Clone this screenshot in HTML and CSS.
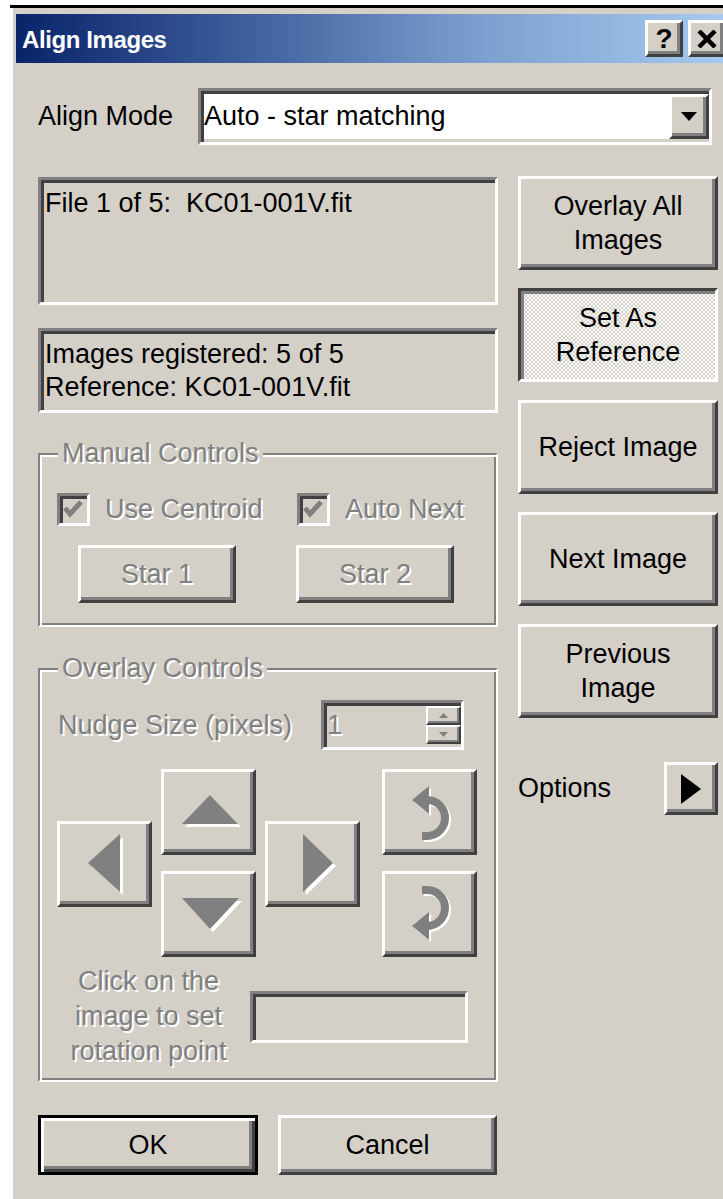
FILE: index.html
```html
<!DOCTYPE html>
<html lang="en">
<head>
<meta charset="utf-8">
<title>Align Images</title>
<link rel="stylesheet" href="styles.css">
</head>
<body>
<div class="topline"></div>
<div class="window">
  <div class="titlebar">
    <span class="title">Align Images</span>
    <div class="cap-btns">
      <span class="cap-btn raised">?</span>
      <span class="cap-btn raised">
        <svg width="20" height="18" viewBox="0 0 20 18"><path d="M2 1 L18 17 M18 1 L2 17" stroke="#000" stroke-width="4.5" fill="none"/></svg>
      </span>
    </div>
  </div>

  <div class="client">
    <div class="mode-row">
      <span class="mode-label">Align Mode</span>
      <div class="combo sunken">
        <span class="combo-text">Auto - star matching</span>
        <span class="combo-btn raised">
          <svg width="16" height="10" viewBox="0 0 16 10"><polygon points="0,0 16,0 8,9" fill="#000"/></svg>
        </span>
      </div>
    </div>

    <div class="main">
      <div class="left">
        <div class="well sunken well-file">File 1 of 5:&nbsp; KC01-001V.fit</div>
        <div class="well sunken well-status">Images registered: 5 of 5<br>Reference: KC01-001V.fit</div>

        <div class="group group-manual">
          <span class="group-label disabled">Manual Controls</span>
          <div class="checks">
            <div class="check check-first">
              <span class="cbox sunken">
                <svg width="27" height="27" viewBox="0 0 27 27"><polyline points="5,12 10,18 21,6" stroke="#808080" stroke-width="5" fill="none"/></svg>
              </span>
              <span class="disabled">Use Centroid</span>
            </div>
            <div class="check">
              <span class="cbox sunken">
                <svg width="27" height="27" viewBox="0 0 27 27"><polyline points="5,12 10,18 21,6" stroke="#808080" stroke-width="5" fill="none"/></svg>
              </span>
              <span class="disabled">Auto Next</span>
            </div>
          </div>
          <div class="star-row">
            <span class="btn raised star-btn disabled">Star 1</span>
            <span class="btn raised star-btn disabled">Star 2</span>
          </div>
        </div>

        <div class="group group-overlay">
          <span class="group-label disabled">Overlay Controls</span>
          <div class="nudge-row">
            <span class="nudge-label disabled">Nudge Size (pixels)</span>
            <div class="spin sunken">
              <span class="spin-val disabled">1</span>
              <div class="spin-btns">
                <span class="spin-half raised">
                  <svg width="9" height="5" viewBox="0 0 9 5"><polygon points="4.5,0 9,5 0,5" fill="#808080"/></svg>
                </span>
                <span class="spin-half raised">
                  <svg width="9" height="5" viewBox="0 0 9 5"><polygon points="0,0 9,0 4.5,5" fill="#808080"/></svg>
                </span>
              </div>
            </div>
          </div>

          <div class="pad">
            <span class="btn raised pad-btn pad-left">
              <svg width="95" height="86" viewBox="0 0 95 86">
                <polygon points="34,45 66,16 66,74" fill="#fff"/>
                <polygon points="31,42 63,13 63,71" fill="#808080"/>
              </svg>
            </span>
            <span class="btn raised pad-btn pad-up">
              <svg width="95" height="86" viewBox="0 0 95 86">
                <polygon points="52,29 24,58 80,58" fill="#fff"/>
                <polygon points="49,26 21,55 77,55" fill="#808080"/>
              </svg>
            </span>
            <span class="btn raised pad-btn pad-down">
              <svg width="95" height="86" viewBox="0 0 95 86">
                <polygon points="24,30 81,30 52,61" fill="#fff"/>
                <polygon points="21,27 78,27 49,58" fill="#808080"/>
              </svg>
            </span>
            <span class="btn raised pad-btn pad-right">
              <svg width="95" height="86" viewBox="0 0 95 86">
                <polygon points="41,16 71,45 41,74" fill="#fff"/>
                <polygon points="38,13 68,42 38,71" fill="#808080"/>
              </svg>
            </span>
            <span class="btn raised pad-btn pad-ccw">
              <svg width="95" height="86" viewBox="0 0 95 86">
                <g transform="translate(2,2)" fill="#fff" stroke="#fff">
                  <path d="M45 31 A18 18 0 1 1 45 67 L40 67" stroke-width="8" fill="none"/>
                  <polygon points="30,31 47,17 47,45" stroke="none"/>
                </g>
                <g fill="#808080" stroke="#808080">
                  <path d="M45 31 A18 18 0 1 1 45 67 L40 67" stroke-width="8" fill="none"/>
                  <polygon points="30,31 47,17 47,45" stroke="none"/>
                </g>
              </svg>
            </span>
            <span class="btn raised pad-btn pad-cw">
              <svg width="95" height="86" viewBox="0 0 95 86">
                <g transform="translate(2,88) scale(1,-1)" fill="#fff" stroke="#fff">
                  <path d="M45 31 A18 18 0 1 1 45 67 L40 67" stroke-width="8" fill="none"/>
                  <polygon points="30,31 47,17 47,45" stroke="none"/>
                </g>
                <g transform="translate(0,86) scale(1,-1)" fill="#808080" stroke="#808080">
                  <path d="M45 31 A18 18 0 1 1 45 67 L40 67" stroke-width="8" fill="none"/>
                  <polygon points="30,31 47,17 47,45" stroke="none"/>
                </g>
              </svg>
            </span>
          </div>

          <div class="rot-row">
            <span class="rot-text disabled">Click on the<br>image to set<br>rotation point</span>
            <span class="rot-box sunken"></span>
          </div>
        </div>

        <div class="dlg-btns">
          <span class="btn default-btn dlg-btn">OK</span>
          <span class="btn raised dlg-btn">Cancel</span>
        </div>
      </div>

      <div class="right">
        <span class="btn raised side-btn">Overlay All<br>Images</span>
        <span class="btn pressed side-btn">Set As<br>Reference</span>
        <span class="btn raised side-btn">Reject Image</span>
        <span class="btn raised side-btn">Next Image</span>
        <span class="btn raised side-btn">Previous<br>Image</span>
        <div class="options-row">
          <span>Options</span>
          <span class="btn raised opt-btn">
            <svg width="20" height="30" viewBox="0 0 20 30"><polygon points="0,0 20,15 0,30" fill="#000"/></svg>
          </span>
        </div>
      </div>
    </div>
  </div>
</div>
</body>
</html>
```

FILE: styles.css
```css
html, body {
  margin: 0;
  height: 100%;
  overflow: hidden;
  background: #fff;
}

body {
  font-family: "Liberation Sans", Arial, sans-serif;
  font-size: 27px;
  color: #000;
}

.topline {
  height: 3px;
  margin: 5px 0 0 10px;
  background: #000;
}

.window {
  box-sizing: border-box;
  width: 716px;
  height: 1191px;
  margin-left: 13px;
  padding: 6px 0 0 3px;
  background: #d4d0c8;
}

/* ---- classic 3D edges ---- */
.raised {
  box-sizing: border-box;
  border: 3px solid;
  border-color: #fff #404040 #404040 #fff;
  box-shadow: inset -3px -3px 0 #808080;
  background: #d4d0c8;
}

.sunken {
  box-sizing: border-box;
  border: 3px solid;
  border-color: #808080 #fff #fff #808080;
  box-shadow: inset 3px 3px 0 #404040, inset -3px -3px 0 #d4d0c8;
}

.pressed {
  box-sizing: border-box;
  border: 3px solid;
  border-color: #404040 #fff #fff #404040;
  box-shadow: inset 3px 3px 0 #808080;
  background-color: #e6e4df;
  background-image: repeating-conic-gradient(#fff 0 25%, #d4d0c8 0 50%);
  background-size: 4px 4px;
}

.disabled {
  color: #808080;
  text-shadow: 2px 2px 0 #fff;
}

/* ---- title bar ---- */
.titlebar {
  height: 49px;
  display: flex;
  align-items: center;
  justify-content: space-between;
  padding: 0 3px 0 6px;
  background: linear-gradient(90deg, #0a246a 0%, #3a5a98 30%, #7d9fcf 65%, #a6caf0 100%);
}

.title {
  color: #fff;
  font-weight: bold;
  font-size: 24px;
  letter-spacing: -0.4px;
  padding-top: 2px;
}

.cap-btns {
  display: flex;
  gap: 5px;
}

.cap-btn {
  width: 38px;
  height: 37px;
  display: flex;
  align-items: center;
  justify-content: center;
  font-weight: bold;
  font-size: 28px;
}

/* ---- client area ---- */
.client {
  padding: 25px 0 0 22px;
}

.mode-row {
  display: flex;
  align-items: center;
  height: 57px;
}

.mode-label {
  width: 160px;
}

.combo {
  width: 514px;
  height: 57px;
  display: flex;
  align-items: center;
  background: #fff;
}

.combo-text {
  padding-left: 3px;
}

.combo-btn {
  width: 40px;
  height: 45px;
  margin-left: auto;
  display: flex;
  align-items: center;
  justify-content: center;
}

.main {
  display: flex;
  gap: 20px;
  margin-top: 31px;
}

.left {
  width: 460px;
}

.right {
  width: 200px;
  display: flex;
  flex-direction: column;
  gap: 18px;
}

/* ---- read-only text wells ---- */
.well {
  line-height: 34px;
  padding: 6px 4px 3px;
}

.well-file {
  height: 128px;
  margin-top: 1px;
}

.well-status {
  height: 85px;
  margin-top: 23px;
  line-height: 33px;
  padding-top: 7px;
}

/* ---- etched group boxes ---- */
.group {
  box-sizing: border-box;
  width: 460px;
  border-style: solid;
  border-width: 2px;
  border-color: #808080 #fff #fff #808080;
  box-shadow: inset 2px 2px 0 #fff, inset -2px -2px 0 #808080;
  padding: 0 15px 22px 17px;
}

.group-label {
  display: table;
  margin: -19px 0 0 1px;
  padding: 0 4px;
  line-height: 34px;
  background: #d4d0c8;
}

.group-manual {
  margin-top: 40px;
}

.group-overlay {
  margin-top: 41px;
  padding-bottom: 11px;
}

.checks {
  display: flex;
  align-items: center;
  height: 34px;
  margin-top: 22px;
}

.check {
  display: flex;
  align-items: center;
  gap: 15px;
}

.check-first {
  width: 240px;
}

.cbox {
  width: 33px;
  height: 33px;
  display: flex;
  align-items: center;
  justify-content: center;
  background: #d4d0c8;
}

.btn {
  display: flex;
  align-items: center;
  justify-content: center;
  text-align: center;
  line-height: 34px;
}

.star-row {
  display: flex;
  gap: 60px;
  margin-top: 19px;
  padding-left: 21px;
}

.star-btn {
  width: 158px;
  height: 58px;
}

.nudge-row {
  display: flex;
  align-items: center;
  height: 50px;
  margin-top: 15px;
}

.nudge-label {
  width: 263px;
  margin-left: 1px;
}

.spin {
  width: 143px;
  height: 50px;
  display: flex;
  align-items: center;
}

.spin-val {
  padding-left: 3px;
}

.spin-btns {
  margin-left: auto;
  width: 35px;
  height: 38px;
  display: flex;
  flex-direction: column;
}

.spin-half {
  flex: 1;
  display: flex;
  align-items: center;
  justify-content: center;
  border-width: 2px;
  box-shadow: inset -2px -2px 0 #808080;
}

.pad {
  display: grid;
  grid-template-columns: 95px 95px 95px 108px;
  grid-template-rows: 86px 86px;
  column-gap: 9px;
  row-gap: 16px;
  margin-top: 19px;
}

.pad-btn {
  width: 95px;
  height: 86px;
}

.pad-btn svg {
  margin: -3px;
  flex: none;
}

.pad-left  { grid-column: 1; grid-row: 1 / 3; align-self: center; margin-top: 2px; }
.pad-up    { grid-column: 2; grid-row: 1; }
.pad-down  { grid-column: 2; grid-row: 2; }
.pad-right { grid-column: 3; grid-row: 1 / 3; align-self: center; margin-top: 2px; }
.pad-ccw   { grid-column: 4; grid-row: 1; justify-self: end; }
.pad-cw    { grid-column: 4; grid-row: 2; justify-self: end; }

.rot-row {
  display: flex;
  align-items: center;
  margin-top: 7px;
}

.rot-text {
  width: 183px;
  text-align: center;
  line-height: 35px;
}

.rot-box {
  width: 218px;
  height: 52px;
  margin-left: 10px;
}

.dlg-btns {
  display: flex;
  gap: 20px;
  margin-top: 33px;
}

.dlg-btn {
  height: 60px;
  width: 219px;
}

.default-btn {
  box-sizing: border-box;
  width: 220px;
  border: 3px solid #000;
  box-shadow: inset 3px 3px 0 #fff, inset -3px -3px 0 #404040, inset -6px -6px 0 #808080;
  background: #d4d0c8;
}

/* ---- right-hand command column ---- */
.side-btn {
  width: 200px;
  height: 94px;
}

.options-row {
  display: flex;
  align-items: center;
  justify-content: space-between;
  height: 53px;
  margin-top: 26px;
}

.opt-btn {
  width: 54px;
  height: 53px;
}
```
